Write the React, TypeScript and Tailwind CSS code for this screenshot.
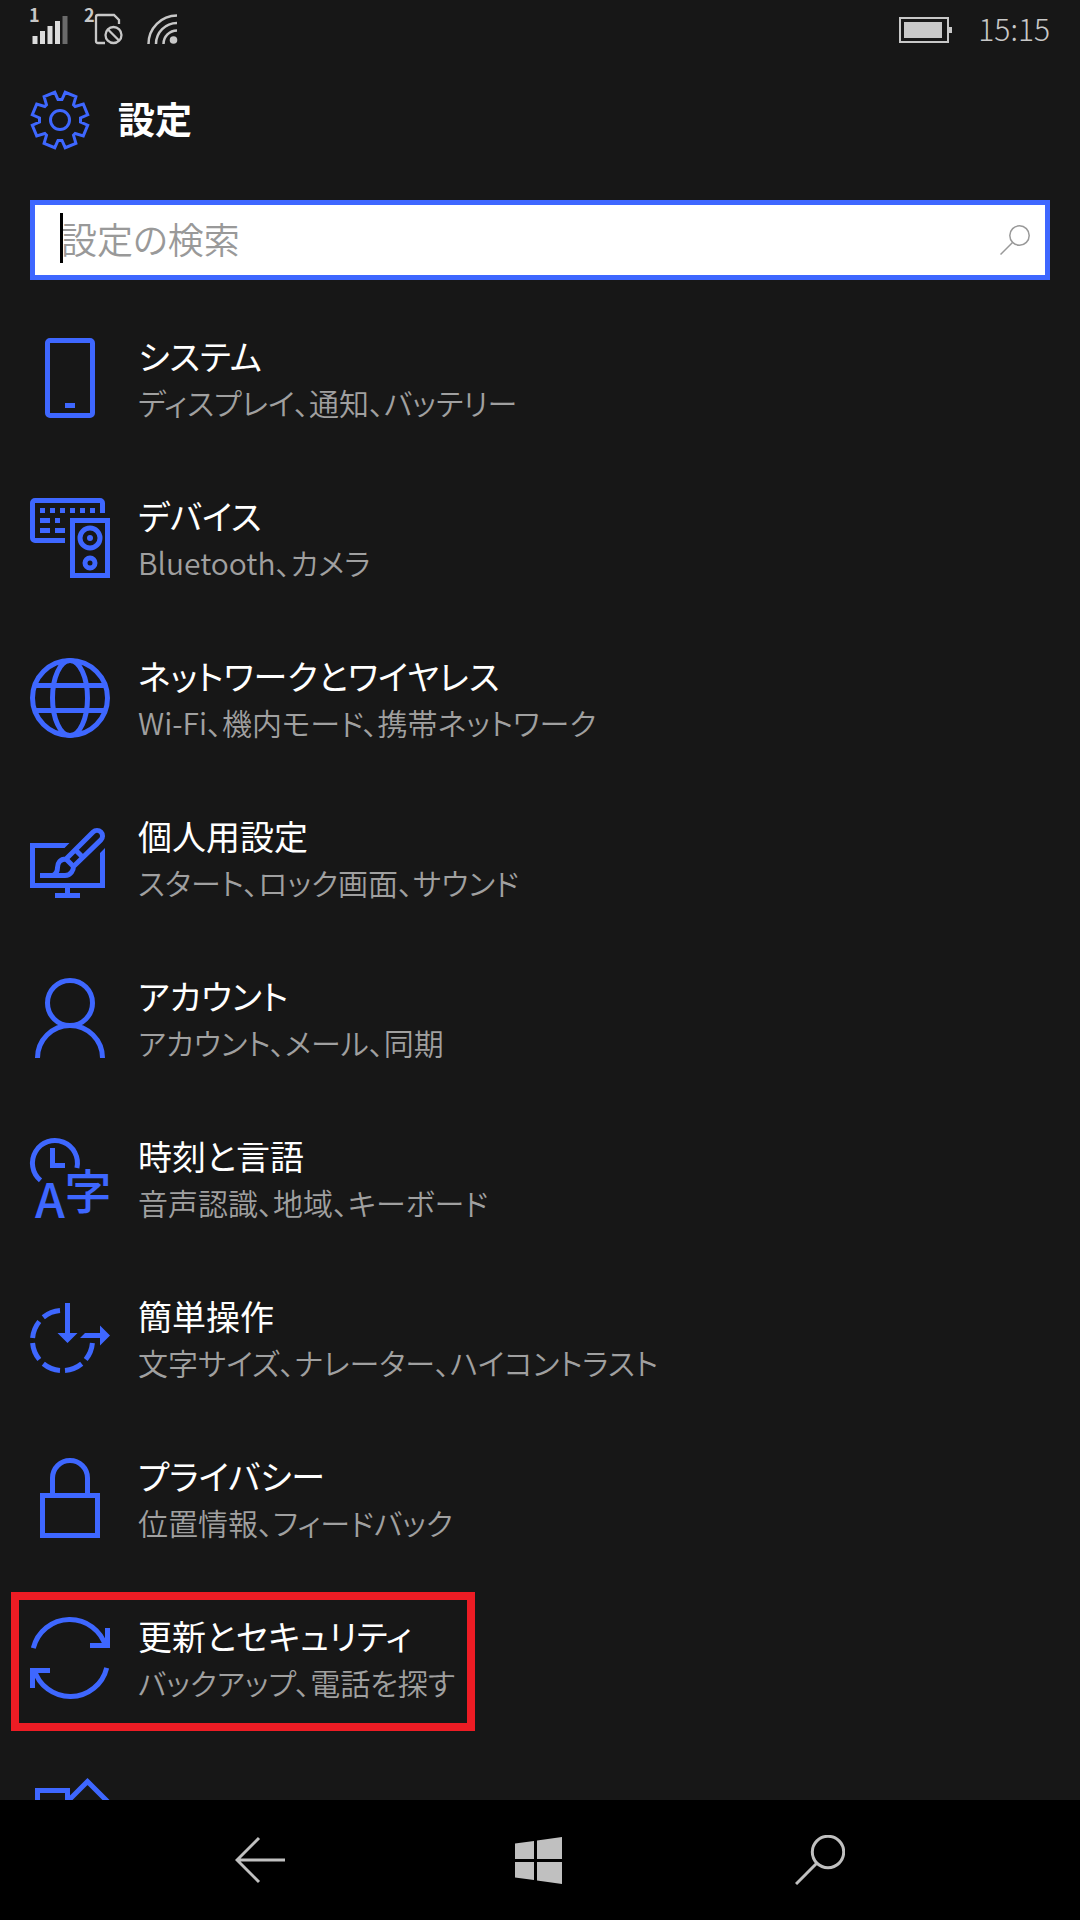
import type { ReactNode } from "react";

type Setting = {
  title?: string;
  description?: string;
  icon: ReactNode;
  highlighted?: boolean;
};

function Icon({ children }: { children: ReactNode }) {
  return (
    <svg
      viewBox="0 0 80 80"
      className="size-20 shrink-0 overflow-visible text-[#3e67ff]"
      fill="none"
      stroke="currentColor"
      strokeWidth="5"
      aria-hidden="true"
    >
      {children}
    </svg>
  );
}

function GearIcon() {
  return (
    <svg
      viewBox="0 0 60 60"
      className="size-[60px] shrink-0 text-[#3e67ff]"
      fill="none"
      stroke="currentColor"
      strokeWidth="3"
      aria-hidden="true"
    >
      <path d="M32 9.5 35.2 2.3 45.9 6.7 43.5 14.8 45.2 16.5 53.3 14.1 57.7 24.8 50.5 28V32L57.7 35.2 53.3 45.9 45.2 43.5 43.5 45.2 45.9 53.3 35.2 57.7 32 50.5H28L24.8 57.7 14.1 53.3 16.5 45.2 14.8 43.5 6.7 45.9 2.3 35.2 9.5 32V28L2.3 24.8 6.7 14.1 14.8 16.5 16.5 14.8 14.1 6.7 24.8 2.3 28 9.5Z" />
      <circle cx="30" cy="30" r="9.5" />
    </svg>
  );
}

const settings: Setting[] = [
  {
    title: "システム",
    description: "ディスプレイ、通知、バッテリー",
    icon: (
      <Icon>
        <rect x="17.5" y="2.5" width="45" height="75" rx="2.5" />
        <path d="M35 67.5H45" />
      </Icon>
    ),
  },
  {
    title: "デバイス",
    description: "Bluetooth、カメラ",
    icon: (
      <Icon>
        <path d="M72.5 15V5A2.5 2.5 0 0 0 70 2.5H5A2.5 2.5 0 0 0 2.5 5V40A2.5 2.5 0 0 0 5 42.5H35" />
        <path d="M10 12.5H65" strokeDasharray="5 5" />
        <path d="M10 22.5H20M25 22.5H30M10 32.5H20M25 32.5H35" />
        <rect x="42.5" y="22.5" width="35" height="55" />
        <circle cx="60" cy="40" r="10" />
        <circle cx="60" cy="40" r="3" fill="currentColor" stroke="none" />
        <circle cx="60" cy="65" r="5" />
      </Icon>
    ),
  },
  {
    title: "ネットワークとワイヤレス",
    description: "Wi-Fi、機内モード、携帯ネットワーク",
    icon: (
      <Icon>
        <circle cx="40" cy="40" r="37.5" />
        <ellipse cx="40" cy="40" rx="17.5" ry="37.5" />
        <path d="M5 27.5H75M5 52.5H75" />
      </Icon>
    ),
  },
  {
    title: "個人用設定",
    description: "スタート、ロック画面、サウンド",
    icon: (
      <Icon>
        <path
          d="M39.5 25H0V70H35V75H25V80H50V75H40V70H75V30L70 35V65H5V30H34.5Z"
          fill="currentColor"
          stroke="none"
        />
        <path d="M10 57.5H35C41 57.5 43.5 52 43.5 48.5L70.9 21.9A5.5 5.5 0 0 0 63.1 14.1L36 41C30 41 27.5 45 27.5 49.5C27.5 53 26 56 23 57.5" />
        <path d="M45.5 32 53 39.5M36 41 44 49" />
      </Icon>
    ),
  },
  {
    title: "アカウント",
    description: "アカウント、メール、同期",
    icon: (
      <Icon>
        <circle cx="40" cy="25" r="22.5" />
        <path d="M7.5 80A32.5 32.5 0 0 1 72.5 80" />
      </Icon>
    ),
  },
  {
    title: "時刻と言語",
    description: "音声認識、地域、キーボード",
    icon: (
      <Icon>
        <path d="M10.5 42.3A22.5 22.5 0 1 1 46.9 30" />
        <path d="M22.5 10V27.5H35" />
        <g
          fill="currentColor"
          stroke="none"
          className="font-['Noto_Sans_CJK_JP',sans-serif] font-medium"
        >
          <text x="20" y="80" fontSize="48" textAnchor="middle">
            A
          </text>
          <text x="58" y="71" fontSize="47" textAnchor="middle">
            字
          </text>
        </g>
      </Icon>
    ),
  },
  {
    title: "簡単操作",
    description: "文字サイズ、ナレーター、ハイコントラスト",
    icon: (
      <Icon>
        <path d="M30 12.6A30 30 0 0 0 13.3 19.3M9.3 23.5A30 30 0 0 0 2.6 40M2.6 45A30 30 0 0 0 9.3 61.5M13.3 65.7A30 30 0 0 0 30 72.4M35 72.4A30 30 0 0 0 51.7 65.7M55.7 61.5A30 30 0 0 0 62.4 45" />
        <path
          d="M35 5H40V35H47.5L37.5 45 27.5 35H35ZM55 35H70V27.5L80 37.5 70 47.5V40H50Z"
          fill="currentColor"
          stroke="none"
        />
      </Icon>
    ),
  },
  {
    title: "プライバシー",
    description: "位置情報、フィードバック",
    icon: (
      <Icon>
        <rect x="12.5" y="37.5" width="55" height="40" />
        <path d="M22.5 37V20A17.5 17.5 0 0 1 57.5 20V37" />
      </Icon>
    ),
  },
  {
    title: "更新とセキュリティ",
    description: "バックアップ、電話を探す",
    highlighted: true,
    icon: (
      <Icon>
        <path d="M3.3 30.2A37.5 37.5 0 0 1 75.9 28.9M76.7 49.8A37.5 37.5 0 0 1 4.1 51.1" />
        <path d="M77.5 10V27.5H60M2.5 70V52.5H20" />
      </Icon>
    ),
  },
  {
    icon: (
      <Icon>
        <path d="M37.5 42.5V12.5H7.5V42.5ZM37.5 23.5 57.5 3.5 77.5 23.5 57.5 43.5 37.5 23.5" />
      </Icon>
    ),
  },
];

function StatusBar() {
  return (
    <div className="flex h-[60px] shrink-0 items-start justify-between px-[30px] pt-2 text-[#c8c8c8]">
      <div className="flex items-center">
        <svg viewBox="0 0 40 36" className="h-9 w-10 overflow-visible" aria-hidden="true">
          <text
            x="-1"
            y="14"
            fontSize="18"
            fill="currentColor"
            className="font-['Noto_Sans_CJK_JP',sans-serif] font-bold"
          >
            1
          </text>
          <path
            d="M2.5 28H7.5V36H2.5ZM10 23H15V36H10ZM17.5 18H22.5V36H17.5ZM25 13H30V36H25Z"
            fill="#dcdcdc"
          />
          <path d="M32.5 8H37.5V36H32.5Z" fill="#6b6b6b" />
        </svg>
        <svg
          viewBox="0 0 40 36"
          className="ml-[14px] h-9 w-10 overflow-visible"
          fill="none"
          stroke="currentColor"
          strokeWidth="2.3"
          aria-hidden="true"
        >
          <text
            x="0"
            y="14"
            fontSize="18"
            fill="currentColor"
            stroke="none"
            className="font-['Noto_Sans_CJK_JP',sans-serif] font-bold"
          >
            2
          </text>
          <path d="M21 35H14A2 2 0 0 1 12 33V9A2 2 0 0 1 14 7H30L35 12V16" />
          <circle cx="29.5" cy="27" r="8" />
          <path d="M24 21.5 35 32.5" />
        </svg>
        <svg
          viewBox="0 0 32 36"
          className="ml-[22px] h-9 w-8"
          fill="none"
          stroke="currentColor"
          strokeWidth="2.5"
          aria-hidden="true"
        >
          <path d="M2.5 36A28.5 28.5 0 0 1 31 7.5M10 36A21 21 0 0 1 31 15M17.5 36A13.5 13.5 0 0 1 31 22.5" />
          <circle cx="27.5" cy="32" r="3.8" fill="currentColor" stroke="none" />
        </svg>
      </div>
      <div className="flex h-11 items-center gap-[26px]">
        <svg viewBox="0 0 53 26" className="h-[26px] w-[53px]" aria-hidden="true">
          <rect x="1" y="1" width="48" height="24" fill="none" stroke="currentColor" strokeWidth="2" />
          <path d="M5 5H43V21H5ZM50 10H53V16H50Z" fill="currentColor" />
        </svg>
        <time className="pb-1 text-[30px] leading-8 font-light">15:15</time>
      </div>
    </div>
  );
}

function SearchBox() {
  return (
    <div className="relative mx-[30px] mt-[50px] flex h-20 shrink-0 items-center border-[5px] border-[#3e67ff] bg-white pr-[15px]">
      <input
        type="text"
        aria-label="設定の検索"
        placeholder="設定の検索"
        className="h-full min-w-0 flex-1 pb-1 pl-[26px] text-[36px] font-[350] text-black caret-transparent outline-none placeholder:text-[#999999]"
      />
      <span className="absolute top-2 left-[25px] h-[50px] w-[3px] bg-black" />
      <button type="button" aria-label="検索">
        <svg
          viewBox="0 0 30 30"
          className="size-[30px]"
          fill="none"
          stroke="#999999"
          strokeWidth="1.5"
          aria-hidden="true"
        >
          <circle cx="19.5" cy="10.5" r="9.7" />
          <path d="M12.5 17.5.5 29.5" />
        </svg>
      </button>
    </div>
  );
}

function SettingRow({ title, description, icon, highlighted }: Setting) {
  return (
    <li>
      <a href="#" className="relative flex min-h-24 w-fit items-center gap-7">
        {icon}
        {title && (
          <span className="flex flex-col pt-1">
            <span className="text-[34px] leading-[44px] whitespace-nowrap text-white">{title}</span>
            <span className="text-[30px] leading-[48px] font-[350] whitespace-nowrap text-[#a0a0a0]">
              {description}
            </span>
          </span>
        )}
        {highlighted && (
          <span className="pointer-events-none absolute -top-[18px] -right-5 -bottom-[25px] -left-[19px] border-8 border-[#ed1c24]" />
        )}
      </a>
    </li>
  );
}

function NavigationBar() {
  return (
    <nav className="flex h-[120px] shrink-0 items-center justify-center gap-[230px] bg-black text-[#c0c0c0]">
      <button type="button" aria-label="戻る">
        <svg
          viewBox="0 0 50 50"
          className="size-[50px]"
          fill="none"
          stroke="currentColor"
          strokeWidth="3"
          aria-hidden="true"
        >
          <path d="M24 3 2 25 24 47M2 25H50" />
        </svg>
      </button>
      <button type="button" aria-label="スタート" className="size-[50px]">
        <svg viewBox="0 0 47 47" className="size-[47px]" fill="currentColor" aria-hidden="true">
          <path d="M0 6.5 19 4V22H0ZM22 3.5 47 0V22H22ZM0 25H19V43L0 40.5ZM22 25H47V47L22 43.5Z" />
        </svg>
      </button>
      <button type="button" aria-label="検索">
        <svg
          viewBox="0 0 50 50"
          className="size-[50px]"
          fill="none"
          stroke="currentColor"
          strokeWidth="3"
          aria-hidden="true"
        >
          <circle cx="33" cy="17" r="15.7" />
          <path d="M22 28 1 49" />
        </svg>
      </button>
    </nav>
  );
}

export default function App() {
  return (
    <div
      lang="ja"
      className="flex h-screen flex-col bg-[#171717] font-['Noto_Sans_CJK_JP',sans-serif] [font-feature-settings:'palt']"
    >
      <StatusBar />
      <header className="mt-[30px] flex shrink-0 items-center gap-7 px-[30px]">
        <GearIcon />
        <h1 className="pb-1 text-[37px] leading-[44px] font-bold text-white">設定</h1>
      </header>
      <SearchBox />
      <main className="min-h-0 flex-1 overflow-hidden pt-[50px]">
        <ul className="flex flex-col gap-16 px-[30px]">
          {settings.map((setting, index) => (
            <SettingRow key={index} {...setting} />
          ))}
        </ul>
      </main>
      <NavigationBar />
    </div>
  );
}
